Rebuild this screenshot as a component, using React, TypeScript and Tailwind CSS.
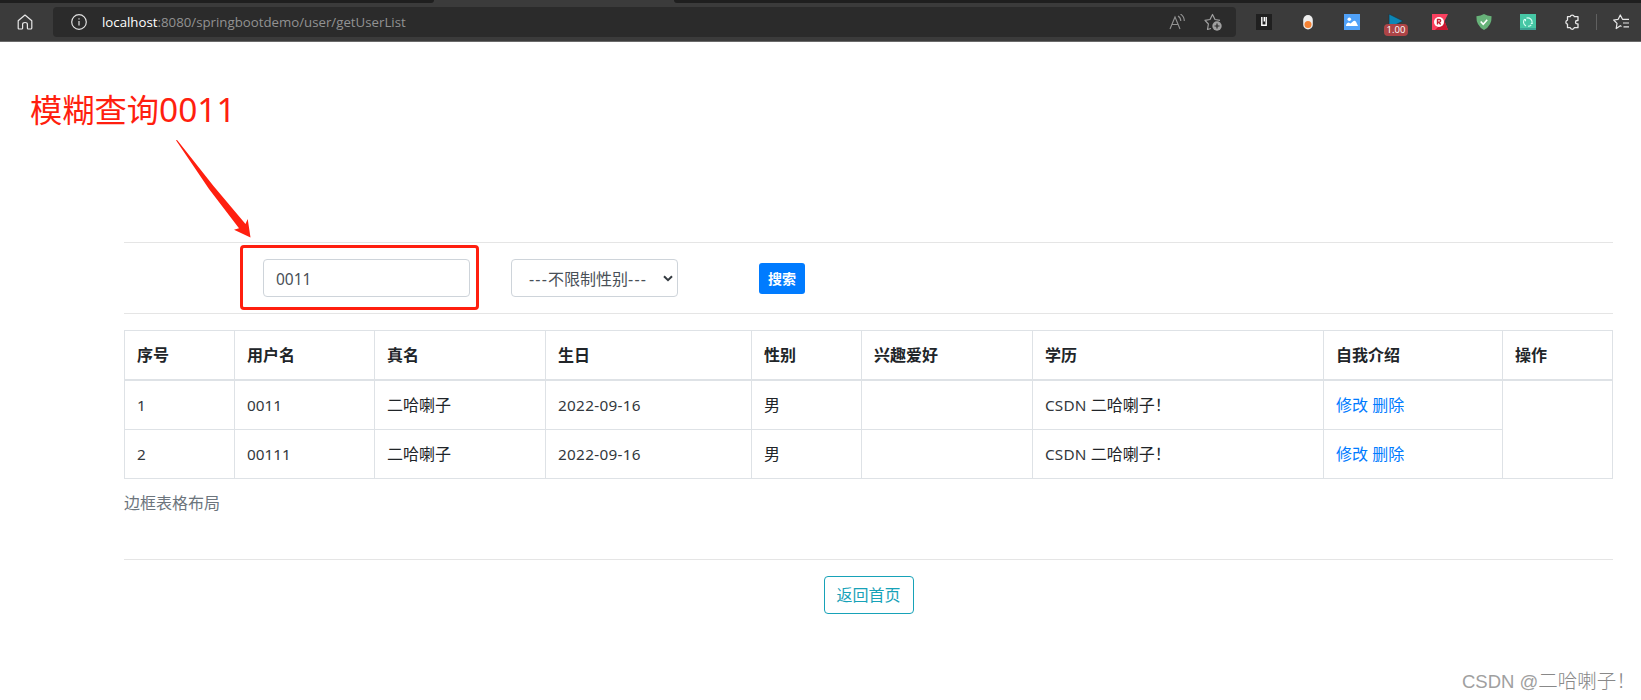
import type { ReactNode } from 'react';

const columns = ['序号', '用户名', '真名', '生日', '性别', '兴趣爱好', '学历', '自我介绍', '操作'];

const users = [
  { id: '1', account: '0011', birthday: '2022-09-16' },
  { id: '2', account: '00111', birthday: '2022-09-16' },
];

function Num({ children }: { children: ReactNode }) {
  return <span className="text-[15.300px] text-[#33383d]">{children}</span>;
}

function Cell({ children }: { children?: ReactNode }) {
  return <td className="border border-[#dee2e6] px-3 text-base leading-6">{children}</td>;
}

function Toolbar() {
  return (
    <header className="h-[42px] border-b border-[#6a6a6a] bg-[#3b3b3b]">
      <div className="flex h-[3px] bg-[#3b3b3b]">
        <div className="w-[434px] rounded-br bg-[#1f1f1f]" />
        <div className="w-[240px]" />
        <div className="flex-1 rounded-bl bg-[#1f1f1f]" />
      </div>
      <div className="flex h-[38px] items-center">
        <svg className="ml-[17px] mt-[-1px] h-4 w-4" viewBox="0 0 16 16" fill="none" stroke="#e8e8e8" strokeWidth="1.2" strokeLinejoin="round">
          <path d="M1.2 6.8 8 1l6.8 5.8V14q0 1-1 1h-2.6q-.8 0-.8-.8V10.500q0-2-2.400-2t-2.400 2v3.700q0 .8-.8.8H2.200q-1 0-1-1z" />
        </svg>
        <div className="ml-5 flex h-[30px] w-[1183px] items-center rounded bg-[#2b2b2b]">
          <svg className="ml-[18px] h-4 w-4 shrink-0" viewBox="0 0 16 16" fill="none" stroke="#e0e0e0" strokeWidth="1.2">
            <circle cx="8" cy="8" r="7.300" />
            <path d="M8 7v4.500M8 4.300v1.300" />
          </svg>
          <div className="ml-[15px] w-[1067px] shrink-0 whitespace-nowrap font-['Open_Sans','Noto_Sans',sans-serif] text-[13.250px] leading-5 text-[#929292]">
            <span className="text-white">localhost</span>:8080/springbootdemo/user/getUserList
          </div>
          <svg className="mt-[-1px] h-4 w-4 shrink-0" viewBox="0 0 16 16" fill="none" stroke="#929292" strokeWidth="1.1">
            <path d="M1 15 6 3l5 12M2.800 10.500h6.400M9 2q2.800 1.800 2.800 5M11.500 0q3.800 2.500 3.800 7" />
          </svg>
          <svg className="ml-[19px] h-[18px] w-[18px] shrink-0" viewBox="0 0 18 18" fill="none" stroke="#a0a0a0" strokeWidth="1.2" strokeLinejoin="round">
            <path d="M7 15.500 3.500 16.500 4.400 11 1 7.300l5-.8L8.500 1.500 11 6.500l5 .8" />
            <circle cx="13" cy="13" r="4.700" fill="#a0a0a0" stroke="none" />
            <path d="M13 10.500v5M10.500 13h5" stroke="#2b2b2b" />
          </svg>
        </div>
        <svg className="ml-5 h-4 w-4 shrink-0" viewBox="0 0 16 16">
          <path d="M0 0h16v16H0z" fill="#202020" />
          <path d="M5.800 3v8.200h4.400V8M8.300 3v4.500M10.200 3v5" fill="none" stroke="#fff" strokeWidth="1.400" />
        </svg>
        <svg className="ml-7 h-4 w-4 shrink-0" viewBox="0 0 16 16">
          <rect x="3.200" y="1" width="9.600" height="14.500" rx="4.800" fill="#eee" />
          <circle cx="8" cy="10.500" r="3.500" fill="#f58233" />
        </svg>
        <svg className="ml-7 h-4 w-4 shrink-0" viewBox="0 0 16 16">
          <path d="M0 0h16v16H0z" fill="#50a1f8" />
          <circle cx="5.300" cy="5.300" r="1.800" fill="#fff" />
          <path d="M2 12q0-3 2.500-3.500l2 1L9.500 7q1.500-.8 2.500.8L14 12z" fill="#fff" />
        </svg>
        <div className="relative ml-7 h-4 w-4 shrink-0">
          <svg className="h-4 w-4" viewBox="0 0 16 16">
            <path d="M1 0 15 7 1 14z" fill="#0b86b6" stroke="#20303a" strokeWidth=".6" />
          </svg>
          <span className="absolute -left-1 top-[10px] h-3 w-6 rounded-sm bg-[#ad4446] text-center font-['Open_Sans',sans-serif] text-[9.500px] leading-3 text-white">1.00</span>
        </div>
        <svg className="ml-7 h-4 w-4 shrink-0" viewBox="0 0 16 16">
          <path d="M0 0h16l-3.500 7L16 16H0z" fill="#fa405f" />
          <path d="m3 16 9.500-9L16 16z" fill="#c9162f" />
          <circle cx="7" cy="8" r="5" fill="#fff" />
          <path d="M5.500 10.500v-5h1.700q1.500 0 1.500 1.300T7.200 8.100H5.500h1l2.200 2.400" fill="none" stroke="#c51f32" strokeWidth="1.400" />
        </svg>
        <svg className="ml-7 h-4 w-4 shrink-0" viewBox="0 0 16 16">
          <path d="M8 0q3 2 7.600 2.200Q16 11.500 8 16 0 11.500.400 2.200 5 2 8 0z" fill="#67b279" />
          <path d="m4.700 7.500 2.500 2.700 4-4.500" fill="none" stroke="#fff" strokeWidth="1.600" />
        </svg>
        <svg className="ml-7 h-4 w-4 shrink-0" viewBox="0 0 16 16">
          <path d="M0 0h16v16H0z" fill="#46c7a5" />
          <path d="M0 14h16v2H0z" fill="#3aa394" />
          <path d="M6 12A4.300 4.300 0 0 1 4.700 5.200M6.500 4.100A4.300 4.300 0 0 1 12 9M11.300 10.800A4.300 4.300 0 0 1 8 12.300M3.800 5.500h1.700v1.700M12.800 9.500h-2" fill="none" stroke="#d5fff2" strokeWidth="1.100" />
        </svg>
        <svg className="ml-7 h-4 w-4 shrink-0" viewBox="0 0 16 16" fill="none" stroke="#e8e8e8" strokeWidth="1.300" strokeLinejoin="round">
          <path d="M3.500 2.700h2.700a2.100 2.100 0 0 1 4.100 0H14v3.800h-.8a1.700 1.700 0 0 0 0 3.400h.8v3.800h-3.700a2.100 2.100 0 0 1-4.100 0H3.500v-3.500a2.100 2.100 0 0 1 0-4.100z" />
        </svg>
        <div className="ml-4 h-4 w-px shrink-0 bg-[#606060]" />
        <svg className="ml-4 h-4 w-4 shrink-0" viewBox="0 0 16 16" fill="none" stroke="#e8e8e8" strokeWidth="1.200" strokeLinejoin="round">
          <path d="M8.500 12.500 7.300 11.700 3.200 14.500l.8-5.200L.700 6l4.500-.7L7.300 1l2.200 4.300H16M10 9h6M10.500 12.800H16" />
        </svg>
      </div>
    </header>
  );
}

function Annotation() {
  return (
    <>
      <div className="absolute left-[30px] top-[86px] whitespace-nowrap font-['Noto_Sans','Noto_Sans_CJK_SC',sans-serif] text-[32.250px] leading-[46px] text-[#ff1f0f]">
        模糊查询<span className="text-[33.500px]">0011</span>
      </div>
      <svg className="absolute left-[170px] top-[135px] h-[110px] w-[90px]" viewBox="170 135 90 110">
        <path d="M176 140.300q.800-.8 1.500.3L213.500 186 245.500 224l2.200-5 2.800 18.500-16.500-7.800 5-1.500L209 189z" fill="#ff1f0f" />
      </svg>
      <div className="absolute left-[240px] top-[245px] h-[65px] w-[239px] rounded border-[3px] border-[#ff1f0f]" />
    </>
  );
}

export default function App() {
  return (
    <div className="relative h-[700px] w-[1641px] overflow-hidden bg-white font-['Noto_Sans','Noto_Sans_CJK_SC',sans-serif] text-[#212529]">
      <Toolbar />
      <main className="ml-[124px] w-[1489px] pt-[200px]">
        <form className="flex h-[72px] border-y border-[#e5e5e5] pt-4" onSubmit={(e) => e.preventDefault()}>
          <input
            className="ml-[139px] h-[38px] w-[207px] rounded border border-[#ced4da] px-3 pt-0.5 text-[15.500px] text-[#495057] outline-none"
            defaultValue="0011"
          />
          <button type="button" className="ml-[41px] flex h-[38px] w-[167px] items-center rounded border border-[#ced4da] pl-[17px] pt-0.5 text-base text-[#495057]">
            <span className="w-[118px] whitespace-nowrap text-left">
              <span className="tracking-[1.200px]">---</span>不限制性别<span className="tracking-[1.200px]">---</span>
            </span>
            <svg className="ml-[16px] mt-[-2px] h-[7px] w-2.5 shrink-0" viewBox="0 0 10 7" fill="none" stroke="#343a40" strokeWidth="2">
              <path d="m1 1.200 4 4 4-4" />
            </svg>
          </button>
          <button type="button" className="ml-[81px] mt-1 h-[31px] w-[46px] rounded-[3px] bg-[#007bff] text-sm font-bold text-white">搜索</button>
        </form>

        <table className="mt-4 w-[1489px] table-fixed border-collapse">
          <colgroup>
            <col className="w-[110px]" />
            <col className="w-[140px]" />
            <col className="w-[171px]" />
            <col className="w-[206px]" />
            <col className="w-[110px]" />
            <col className="w-[171px]" />
            <col className="w-[291px]" />
            <col className="w-[179px]" />
            <col className="w-[110px]" />
          </colgroup>
          <thead>
            <tr className="h-[49px]">
              {columns.map((name) => (
                <th key={name} className="border border-b-2 border-[#dee2e6] px-3 text-left text-base font-bold leading-6">
                  {name}
                </th>
              ))}
            </tr>
          </thead>
          <tbody>
            {users.map((user, index) => (
              <tr key={user.id} className={index === 0 ? 'h-[50px]' : 'h-[49px]'}>
                <Cell><Num>{user.id}</Num></Cell>
                <Cell><Num>{user.account}</Num></Cell>
                <Cell>二哈喇子</Cell>
                <Cell><span className="tracking-[0.3px]"><Num>{user.birthday}</Num></span></Cell>
                <Cell>男</Cell>
                <Cell />
                <Cell><span className="tracking-[0.2px]"><Num>CSDN </Num></span>二哈喇子！</Cell>
                <Cell>
                  <a className="text-[#007bff]">修改</a> <a className="text-[#007bff]">删除</a>
                </Cell>
                {index === 0 && <td rowSpan={2} className="border border-[#dee2e6]" />}
              </tr>
            ))}
          </tbody>
        </table>
        <p className="mt-3 h-6 text-base leading-6 text-[#6c757d]">边框表格布局</p>

        <div className="mt-11 flex justify-center border-t border-[#e5e5e5] pt-4">
          <button type="button" className="h-[38px] w-[90px] rounded border border-[#17a2b8] text-base text-[#17a2b8]">返回首页</button>
        </div>
      </main>
      <Annotation />
      <div className="absolute left-[1462px] top-[667px] whitespace-nowrap font-['Liberation_Sans','Noto_Sans_CJK_SC',sans-serif] text-[18.500px] leading-7 text-[#a0a0a0]">
        CSDN @<span className="text-[19.500px] font-light text-[#888]">二哈喇子！</span>
      </div>
    </div>
  );
}
